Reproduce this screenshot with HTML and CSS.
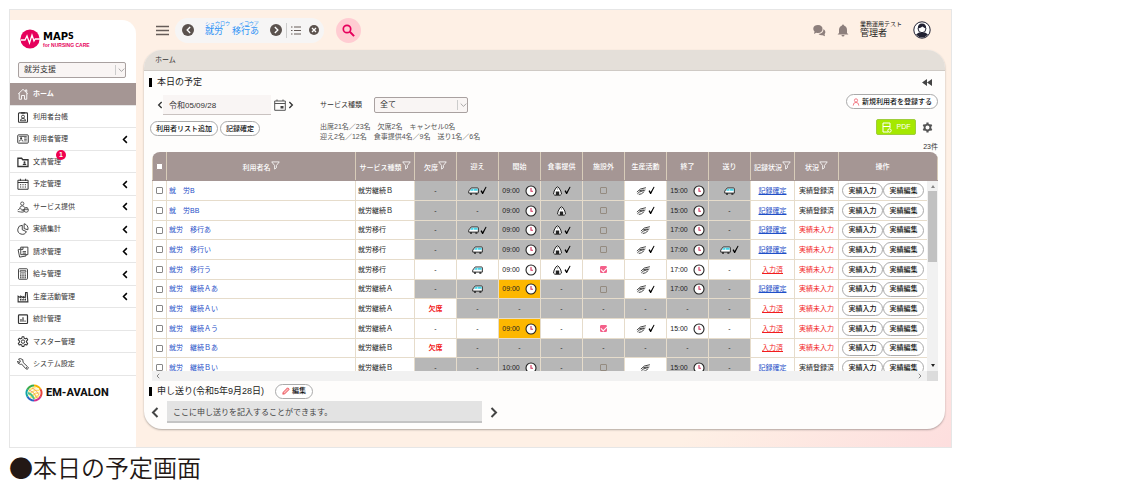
FILE: index.html
```
<!DOCTYPE html>
<html lang="ja">
<head>
    <meta charset="UTF-8">
    <title>本日の予定</title>
    <link rel="stylesheet" href="styles.css">
</head>
<body>

    <!-- icon set -->
    <svg class="icon-set" width="0" height="0" aria-hidden="true">
        <symbol id="left" viewBox="0 0 8 12"><path d="M6.500 1.500 2 6l4.500 4.500" fill="none" stroke="currentColor" stroke-width="2"/></symbol>
        <symbol id="right" viewBox="0 0 8 12"><path d="M1.500 1.500 6 6l-4.500 4.500" fill="none" stroke="currentColor" stroke-width="2"/></symbol>
        <symbol id="down" viewBox="0 0 10 10"><path d="m1 3 4 4 4-4" fill="none" stroke="currentColor"/></symbol>
        <symbol id="funnel" viewBox="0 0 10 10"><path d="M.8 1h8.400L6 5v2.500L4 9V5z" fill="none" stroke="currentColor" stroke-width=".9"/></symbol>
        <symbol id="check" viewBox="0 0 8 10"><path d="M.6 5.500 2 4.800l1 1.900L6.500.800l1 .3L3.500 9h-1z" fill="#000"/></symbol>
        <symbol id="clock" viewBox="0 0 12 12"><circle cx="6" cy="6" r="5" fill="#fff" stroke="#222" stroke-width="1.100"/><path d="M6 3v3.300h2" fill="none" stroke="#d2335c" stroke-width="1.100"/></symbol>
        <symbol id="van" viewBox="0 0 12 9"><path d="M3.500 1.200h6.800q1 0 1 1v4.600H.8V4.600z" fill="#fff" stroke="#222"/><path d="m2.200 4.200 1.900-2.200h1.900v2.200zM6.600 2h3.900v2.200H6.600z" fill="#43d3e8"/><path d="M2.200 7h2.200v1.500H2.200zM8 7h2.200v1.500H8z" fill="#222"/></symbol>
        <symbol id="rice" viewBox="0 0 10 10"><path d="M5 .8Q6.300.8 8.300 5q1.700 4-.6 4.200H2.300Q0 9 1.700 5 3.700.8 5 .8z" fill="#fff" stroke="#222"/><path d="M3.300 5.500h3.400v3.600H3.300z" fill="#222"/><path d="M5 2v2" stroke="#bbb"/></symbol>
        <symbol id="hand" viewBox="0 0 10 8"><path d="M.8 5 4 2.200 9 1M1.200 6.600 3 5l5.500-2M2.500 7.200 5 6.500l2.500-2M3 3.800l4-.8" fill="none" stroke="#444" stroke-width=".9"/></symbol>
        <symbol id="gear" viewBox="0 0 16 16"><path d="M6.800 1h2.400l.4 2 1.500.8 2-.8 1.200 2.100-1.500 1.400v1.900l1.500 1.400-1.200 2.100-2-.7-1.500.8-.4 2H6.800l-.4-2-1.500-.8-2 .7-1.200-2.100 1.500-1.400V6.500L1.700 5.100 2.900 3l2 .8L6.400 3z" fill="none" stroke="currentColor" stroke-width="1.400" stroke-linejoin="round"/><circle cx="8" cy="7.500" r="2.300" fill="none" stroke="currentColor" stroke-width="1.300"/></symbol>
        <symbol id="cog" viewBox="0 0 16 16"><circle cx="8" cy="8" r="4.200" fill="none" stroke="currentColor" stroke-width="2.600"/><path d="M8 .8v3M8 12.200v3M1.800 4.400l2.600 1.500M11.600 10.100l2.600 1.500M1.800 11.600l2.600-1.500M11.600 5.900l2.600-1.500" stroke="currentColor" stroke-width="3.200"/></symbol>
        <symbol id="home" viewBox="0 0 16 16"><path d="M1.500 8 8 1.800 14.500 8M3 7v8h3v-5h4v5h3V7M11.500 4.800V2.500h1.500v3.700" fill="none" stroke="currentColor" stroke-width="1.200"/></symbol>
        <symbol id="ledger" viewBox="0 0 16 16"><rect x="2" y="2.500" width="12" height="12.500" rx="1" fill="none" stroke="currentColor" stroke-width="1.400"/><path d="M5.500 1.500h5v2h-5z" fill="currentColor"/><circle cx="8" cy="7.500" r="2" fill="none" stroke="currentColor" stroke-width="1.200"/><path d="M4.500 13q0-3 3.500-3t3.500 3z" fill="none" stroke="currentColor" stroke-width="1.200"/></symbol>
        <symbol id="card" viewBox="0 0 16 16"><rect x="1" y="2.500" width="14" height="11" rx="1" fill="none" stroke="currentColor" stroke-width="1.300"/><circle cx="5.500" cy="7" r="1.400" fill="currentColor"/><path d="M3 11.500q0-2.500 2.500-2.500T8 11.500M9.500 6.500H13M9.500 8.500H13M9.500 10.500H13M3 4.700h10" fill="none" stroke="currentColor"/></symbol>
        <symbol id="folder" viewBox="0 0 16 16"><path d="M1.200 3h5l1.500 2h7v9H1.200z" fill="none" stroke="currentColor" stroke-width="1.700"/><circle cx="10" cy="8.300" r="1.300" fill="currentColor"/><path d="M7.500 12q0-2.300 2.500-2.300t2.500 2.300z" fill="currentColor"/></symbol>
        <symbol id="calendar" viewBox="0 0 16 16"><path d="M1.200 3h13.600v12H1.200zM1.200 6h13.600M4.500 1v3M11.500 1v3" fill="none" stroke="currentColor" stroke-width="1.300"/><path d="M4 9h8M4 12h8" stroke="currentColor" stroke-width="1.600" stroke-dasharray="1.600 1.600"/></symbol>
        <symbol id="service" viewBox="0 0 16 16"><circle cx="7" cy="3.500" r="2.200" fill="none" stroke="currentColor"/><path d="M3.500 10Q4 6.500 7 6.500t3 2.500M1 12l3-2 3 1.500h3l-1 1.500H6M1 14l6 1 3-1" fill="none" stroke="currentColor"/><circle cx="12.200" cy="12" r="3" fill="none" stroke="currentColor"/><path d="M9.500 11.500h5.400M11 9h3" stroke="currentColor"/></symbol>
        <symbol id="pie" viewBox="0 0 16 16"><path d="M7 3a6 6 0 1 0 5.500 8.500L7 9zM9.500 1v6.500l5 1.500A6.500 6.500 0 0 0 9.500 1z" fill="none" stroke="currentColor" stroke-width="1.200"/></symbol>
        <symbol id="bill" viewBox="0 0 16 16"><path d="M5 1.500h9.500v10H5zM5 4 1.500 5l2 9.800 8.500-1.500v-1.500M8 1.500v3H5M7.500 7.500H12M7.500 9.500H12" fill="none" stroke="currentColor" stroke-width="1.200"/></symbol>
        <symbol id="calc" viewBox="0 0 16 16"><rect x="2" y="1" width="12" height="14" rx="1" fill="none" stroke="currentColor" stroke-width="1.200"/><path d="M4.200 3.500h7.600v2H4.200z" fill="none" stroke="currentColor"/><path d="M4 8h8M4 10.500h8M4 13h8" stroke="currentColor" stroke-width="1.400" stroke-dasharray="2 1"/></symbol>
        <symbol id="factory" viewBox="0 0 16 16"><path d="M1.500 14.500V7L5 9V7l3.500 2V7.500L11 9l.5-7h2l1 12.500z" fill="none" stroke="currentColor" stroke-width="1.500"/><path d="M4 11.500h8" stroke="currentColor" stroke-width="2" stroke-dasharray="2 1"/></symbol>
        <symbol id="stats" viewBox="0 0 16 16"><rect x="2" y="2.500" width="12" height="11.500" rx="1" fill="none" stroke="currentColor" stroke-width="1.600"/><path d="M5.300 11.500V8M8 11.500v-6M10.700 11.500V10" stroke="currentColor" stroke-width="1.500"/></symbol>
        <symbol id="wrench" viewBox="0 0 16 16"><path d="M2 1.500 4.500 4 4 5.500 2.500 6 .8 4Q.5 8 4.500 8.500L6 8l6 6.500q2 1 2.800-.5T14 11.500L8.200 6Q9 1 4.500.8z" fill="none" stroke="currentColor" stroke-width="1.200"/><circle cx="12.800" cy="12.800" r=".7" fill="currentColor"/></symbol>
        <symbol id="user" viewBox="0 0 10 10"><circle cx="5" cy="3" r="2" fill="none" stroke="#f0626e"/><path d="M1.500 9.500Q1.500 5.500 5 5.500t3.500 4" fill="none" stroke="#f0626e"/></symbol>
        <symbol id="pencil" viewBox="0 0 10 10"><path d="m1 9 .6-2.500L7 1l2 2-5.500 5.400z" fill="#fbb" stroke="#e2333f"/></symbol>
    </svg>

    <figure class="shot">
        <div class="app">
            <aside class="sidebar">
                <div class="logo">
                    <svg width="20" height="20" viewBox="0 0 20 20"><circle cx="10" cy="10" r="9.600" fill="#e6005c"/><path d="M1 11h4l2-4 2.500 7 2.500-8 2 6 1.200-2H20" fill="none" stroke="#fff" stroke-width="1.300"/></svg>
                    <div>
                        <div class="logo-name">MAP<small>S</small></div>
                        <div class="logo-sub">for NURSING CARE</div>
                    </div>
                </div>
                <div class="select-box side-select">
                    <select aria-label="事業"><option>就労支援</option></select>
                    <svg><use href="#down"/></svg>
                </div>
                <ul class="menu" id="menu"></ul>
                <div class="vendor">
                    <svg width="18" height="18" viewBox="0 0 18 18" fill="none" stroke-width="2">
                        <path d="M9 1.500A7.500 7.500 0 0 1 15.500 5.500" stroke="#f4b400"/>
                        <path d="M15.500 5.300a7.500 7.500 0 0 1 0 7.400" stroke="#e8453c"/>
                        <path d="M15.500 12.500A7.500 7.500 0 0 1 9 16.500" stroke="#d5318c"/>
                        <path d="M9 16.500a7.500 7.500 0 0 1-6.500-4" stroke="#2a64c8"/>
                        <path d="M2.500 12.700a7.500 7.500 0 0 1 0-7.400" stroke="#12a5a5"/>
                        <path d="M2.500 5.500A7.500 7.500 0 0 1 9 1.500" stroke="#3bab4a"/>
                        <circle cx="9" cy="9" r="6" fill="#ffe66b" stroke="none"/>
                        <path d="M3 10q5-6 11-5M4 13q5-7 11-5M7 15q3-5 8-5" stroke="#fff" stroke-width="1.200"/>
                        <path d="M4 6q5 1 8 8M7 4q5 2 7 7" stroke="#ef8a5b" stroke-width=".8"/>
                        <path d="M3 9q4 1 6 6" stroke="#4bbf8b"/>
                    </svg>
                    <span>EM-AVALON</span>
                </div>
            </aside>

            <div class="main">
                <header class="topbar">
                    <button class="plain" aria-label="メニュー"><svg width="13" height="11"><path d="M0 1.500h13M0 5.500h13M0 9.500h13" stroke="#665c58" stroke-width="1.500"/></svg></button>
                    <div class="pill">
                        <button class="round" aria-label="前の利用者"><svg width="7" height="8"><use href="#left"/></svg></button>
                        <div class="current-user">
                            <div class="kana"><span>シュウロウ</span><span>イコウア</span></div>
                            <a href="#">就労　移行あ</a>
                        </div>
                        <button class="round" aria-label="次の利用者"><svg width="7" height="8"><use href="#right"/></svg></button>
                        <span class="split"></span>
                        <button class="plain" aria-label="一覧"><svg width="10" height="9"><path d="M3 1h7M3 4.500h7M3 8h7M0 1h1.500M0 4.500h1.500M0 8h1.500" stroke="#665c58"/></svg></button>
                        <button class="round small" aria-label="解除"><svg width="6" height="6" viewBox="0 0 6 6"><path d="m1 1 4 4M5 1 1 5" stroke="#fff" stroke-width="1.300"/></svg></button>
                    </div>
                    <button class="search" aria-label="検索"><svg width="13" height="13" viewBox="0 0 13 13"><circle cx="5" cy="5" r="3.700" fill="none" stroke="#e6005c" stroke-width="1.700"/><path d="m7.800 7.800 4.300 4.300" stroke="#e6005c" stroke-width="2"/></svg></button>
                    <div class="account">
                        <svg width="13" height="13" viewBox="0 0 13 13" fill="#8d7f7c"><path d="M5 1q4.500.3 4.500 4T5 9q-1 0-1.800-.3L1 10l.5-2.500Q0 6 .3 4 1 1.200 5 1z"/><path d="M10.500 5q0 4.500-5 5 1.500 1.500 4 1.200l2.500 1-.4-2q2-2.700-1.100-5.200z"/></svg>
                        <svg width="12" height="13" viewBox="0 0 12 13" fill="#8d7f7c"><path d="M6 .5q1 0 1 1 3 1 3 4.500v3l1.500 1.500H.5L2 9V6q0-3.500 3-4.500 0-1 1-1zM4.500 11h3q0 1.500-1.500 1.500T4.500 11z"/></svg>
                        <div class="who">
                            <div class="office">業務運用テスト</div>
                            <div>管理者</div>
                        </div>
                        <svg width="18" height="18" viewBox="0 0 18 18"><circle cx="9" cy="9" r="8.200" fill="#fff" stroke="#223" stroke-width="1"/><path d="M3 13.500Q5 11 9 11t6 2.500Q12.500 16.500 9 16.500T3 13.500z" fill="#223"/><circle cx="9" cy="7.800" r="3.900" fill="#fff" stroke="#223"/><path d="M4.800 7.500Q4.800 2.500 9 2.500t4.200 5Q11 7 9.500 5.500 8 7 4.800 7.500z" fill="#223"/></svg>
                    </div>
                </header>

                <section class="panel">
                    <div class="crumb">ホーム</div>
                    <div class="content">
                        <div class="title-row">
                            <h1>本日の予定</h1>
                            <button class="plain fold" aria-label="閉じる"><svg width="10" height="7"><path d="M5 0v7L0 3.500zM10 0v7L5 3.500z" fill="#444"/></svg></button>
                        </div>

                        <div class="tools">
                            <div class="tools-left">
                                <div class="date-row">
                                    <button class="plain" aria-label="前日"><svg width="6" height="8"><use href="#left"/></svg></button>
                                    <input type="text" value="令和05/09/28" aria-label="日付">
                                    <button class="plain" aria-label="カレンダー"><svg width="12" height="12" viewBox="0 0 12 12"><path d="M.7 2h10.600v9.300H.7zM.7 4.500h10.600M3 .5V2M9 .5V2" fill="none" stroke="#555"/><path d="M6.500 7h3v2.500h-3z" fill="#444"/></svg></button>
                                    <button class="plain" aria-label="翌日"><svg width="6" height="8"><use href="#right"/></svg></button>
                                </div>
                                <div class="button-row">
                                    <button class="oval">利用者リスト追加</button>
                                    <button class="oval">記録確定</button>
                                </div>
                            </div>
                            <div class="tools-mid">
                                <div class="filter-row">
                                    <label for="service-type">サービス種類</label>
                                    <div class="select-box">
                                        <select id="service-type"><option>全て</option></select>
                                        <svg><use href="#down"/></svg>
                                    </div>
                                </div>
                                <p class="summary">出席21名／23名　欠席2名　キャンセル0名<br>迎え2名／12名　食事提供4名／9名　送り1名／6名</p>
                            </div>
                            <div class="tools-right">
                                <button class="oval"><svg width="8" height="8"><use href="#user"/></svg>新規利用者を登録する</button>
                                <div class="pdf-row">
                                    <button class="pdf"><svg width="10" height="11" viewBox="0 0 10 11" fill="none" stroke="#fff"><path d="M6 10H1V1h7v5M1 4.500h7"/><circle cx="7.500" cy="8.500" r="1.700"/></svg>PDF</button>
                                    <button class="plain" aria-label="設定"><svg class="cog" width="11" height="11"><use href="#cog"/></svg></button>
                                </div>
                                <div class="total">23件</div>
                            </div>
                        </div>

                        <div class="table-box">
                            <table>
                                <colgroup>
                                    <col class="c-check"><col class="c-name"><col class="c-service">
                                    <col class="c-cell" span="8">
                                    <col class="c-state" span="2"><col class="c-ops">
                                </colgroup>
                                <thead>
                                    <tr>
                                        <th><input type="checkbox" aria-label="すべて選択"></th>
                                        <th>利用者名<svg class="funnel"><use href="#funnel"/></svg></th>
                                        <th>サービス種類<svg class="funnel"><use href="#funnel"/></svg></th>
                                        <th>欠席<svg class="funnel"><use href="#funnel"/></svg></th>
                                        <th>迎え</th>
                                        <th>開始</th>
                                        <th>食事提供</th>
                                        <th>施設外</th>
                                        <th>生産活動</th>
                                        <th>終了</th>
                                        <th>送り</th>
                                        <th>記録状況<svg class="funnel"><use href="#funnel"/></svg></th>
                                        <th>状況<svg class="funnel"><use href="#funnel"/></svg></th>
                                        <th class="ops">操作</th>
                                    </tr>
                                </thead>
                                <tbody id="rows"></tbody>
                            </table>
                            <div class="scroll-y"><span class="tri up"></span><span class="thumb"></span><span class="tri down"></span></div>
                        </div>
                        <div class="scroll-x">
                            <svg width="4" height="6"><use href="#left"/></svg>
                            <svg width="4" height="6"><use href="#right"/></svg>
                            <span class="corner"></span>
                        </div>

                        <div class="title-row memo-title">
                            <h2>申し送り(令和5年9月28日)</h2>
                            <button class="oval"><svg width="8" height="8"><use href="#pencil"/></svg>編集</button>
                        </div>
                        <div class="memo">
                            <button class="plain" aria-label="前へ"><svg width="8" height="13"><use href="#left"/></svg></button>
                            <input type="text" value="ここに申し送りを記入することができます。" aria-label="申し送り" readonly>
                            <button class="plain" aria-label="次へ"><svg width="8" height="13"><use href="#right"/></svg></button>
                        </div>
                    </div>
                </section>
            </div>
        </div>
        <figcaption>●本日の予定画面</figcaption>
    </figure>

    <script>
        // [icon, label, has submenu, badge]
        const menu = [
            ['home', 'ホーム', false],
            ['ledger', '利用者台帳', false],
            ['card', '利用者管理', true],
            ['folder', '文書管理', false, 1],
            ['calendar', '予定管理', true],
            ['service', 'サービス提供', true],
            ['pie', '実績集計', true],
            ['bill', '請求管理', true],
            ['calc', '給与管理', true],
            ['factory', '生産活動管理', true],
            ['stats', '統計管理', false],
            ['gear', 'マスター管理', false],
            ['wrench', 'システム設定', false]
        ];

        document.getElementById('menu').innerHTML = menu.map(([icon, label, sub, badge], i) => `
            <li class="${i === 0 ? 'active' : ''}"><a href="#">
                <svg width="12" height="12"><use href="#${icon}"/></svg>
                <span class="label">${label}${badge ? `<b class="badge">${badge}</b>` : ''}</span>
                ${sub ? '<svg class="arrow" width="6" height="9"><use href="#left"/></svg>' : ''}
            </a></li>`).join('');

        // a leading "g" is a locked (gray) cell, "o" is a late (orange) cell, "+" is done
        const rows = [
            ['就　労B', '就労継続Ｂ', 'g- gvan+ g09:00 grice+ gbox hand+ g15:00 gvan', '記録確定', '実績登録済'],
            ['就　労BB', '就労継続Ｂ', 'g- g- g09:00 grice gbox hand+ g15:00 g-', '記録確定', '実績登録済'],
            ['就労　移行あ', '就労移行', 'g- gvan+ g09:00 grice+ gbox hand g17:00 g-', '記録確定', '実績未入力'],
            ['就労　移行い', '就労移行', 'g- gvan g09:00 grice+ gbox hand+ g17:00 gvan+', '記録確定', '実績未入力'],
            ['就労　移行う', '就労移行', '- van 09:00 rice+ box+ hand 17:00 -', '入力済', '実績未入力'],
            ['就労　継続Ａあ', '就労継続Ａ', 'g- gvan o09:00 g- gbox hand+ g17:00 g-', '記録確定', '実績未入力'],
            ['就労　継続Ａい', '就労継続Ａ', '欠席 g- g- g- g- g- g- g-', '入力済', '実績未入力'],
            ['就労　継続Ａう', '就労継続Ａ', '- - o09:00 - box+ hand+ 15:00 -', '入力済', '実績未入力'],
            ['就労　継続Ｂあ', '就労継続Ｂ', '欠席 g- g- g- g- g- g- g-', '入力済', '実績未入力'],
            ['就労　継続Ｂい', '就労継続Ｂ', 'g- g- g10:00 g- gbox hand g15:00 g-', '記録確定', '実績登録済']
        ];

        function cell(code) {
            let cls = '';
            if (code[0] === 'g') cls = 'locked';
            if (code[0] === 'o') cls = 'late';
            if (cls) code = code.slice(1);
            const done = code.endsWith('+');
            const kind = code.replace('+', '');
            let body = kind;
            if (kind === '欠席') {
                cls = 'absent';
            } else if (kind === 'box') {
                body = `<input type="checkbox" aria-label="施設外"${done ? ' checked' : ''}>`;
            } else if (kind.includes(':')) {
                body = `<span class="time">${kind}<svg width="12" height="12"><use href="#clock"/></svg></span>`;
            } else if (kind !== '-') {
                body = `<span class="mark"><svg width="11" height="10"><use href="#${kind}"/></svg>` +
                    (done ? '<svg width="7" height="9"><use href="#check"/></svg>' : '') + '</span>';
            }
            return `<td class="${cls}">${body}</td>`;
        }

        document.getElementById('rows').innerHTML = rows.map(([name, service, cells, record, state]) => `
            <tr>
                <td><input type="checkbox" aria-label="${name}"></td>
                <td class="text"><a href="#">${name}</a></td>
                <td class="text">${service}</td>
                ${cells.split(' ').map(cell).join('')}
                <td><a href="#" class="record ${record === '入力済' ? 'red' : ''}">${record}</a></td>
                <td class="${state === '実績未入力' ? 'red' : ''}">${state}</td>
                <td class="ops"><div><button class="oval">実績入力</button><button class="oval">実績編集</button></div></td>
            </tr>`).join('');
    </script>
</body>
</html>
```
FILE: styles.css
```
* {
    box-sizing: border-box;
}
body {
    margin: 0;
    background-color: #fff;
    font-family: "Liberation Sans", "Noto Sans CJK JP", sans-serif;
    font-size: 7px;
    line-height: 10px;
    color: #333;
}
button, input, select {
    margin: 0;
    padding: 0;
    font: inherit;
    color: inherit;
}
a {
    text-decoration: none;
    color: inherit;
}
svg {
    display: block;
    flex: none;
}
.icon-set {
    position: absolute;
}
.shot {
    margin: 9px 169px 0 9px;
}
.app {
    display: flex;
    border: 1px solid #e6e6e6;
    background: linear-gradient(135deg, #fef0e5 80%, #fddede);
}
figcaption {
    margin-top: 5px;
    font-family: "Noto Sans CJK JP", sans-serif;
    font-size: 24px;
    font-weight: 350;
    line-height: 28px;
    color: #231815;
}

/* sidebar */
.sidebar {
    width: 126px;
    flex: none;
    margin-top: 10px;
    background-color: #fff;
    border-top-right-radius: 14px;
}
.logo {
    display: flex;
    align-items: center;
    gap: 3px;
    padding: 9px 0 13px 10px;
    color: #000;
}
.logo-name {
    font-family: "DejaVu Sans", sans-serif;
    font-size: 10px;
    font-weight: bold;
    line-height: 11px;
}
.logo-name small {
    font-size: 8px;
    vertical-align: top;
}
.logo-sub {
    font-size: 5px;
    font-weight: bold;
    line-height: 6px;
    color: #e6005c;
}
.select-box {
    position: relative;
    width: 94px;
}
.select-box select {
    display: block;
    width: 100%;
    height: 16px;
    padding: 0 5px;
    border: 1px solid #a9a1a0;
    border-radius: 2px;
    background-color: #f9f5f4;
    font-size: 8px;
    appearance: none;
}
.select-box svg {
    position: absolute;
    top: 3px;
    right: 1px;
    width: 10px;
    height: 10px;
    padding-left: 2px;
    border-left: 1px solid #ccc;
    color: #888;
}
.side-select {
    width: auto;
    margin: 0 10px 5px 8px;
}
.menu {
    margin: 0;
    padding: 0;
    list-style: none;
}
.menu li {
    height: 23px;
    border-bottom: 1px solid #e6e6e6;
}
.menu li:nth-child(2n) {
    height: 22px;
}
.menu a {
    display: flex;
    align-items: center;
    height: 100%;
    gap: 4px;
    padding: 0 8px 0 7px;
}
.menu .active {
    background-color: #a59694;
    color: #fff;
    font-weight: bold;
}
.label {
    position: relative;
}
.badge {
    position: absolute;
    top: -7px;
    right: -5px;
    width: 10px;
    border-radius: 5px;
    background-color: #f0004f;
    color: #fff;
    text-align: center;
}
.arrow {
    margin-left: auto;
    color: #000;
}
.vendor {
    display: flex;
    align-items: center;
    gap: 3px;
    padding: 8px 0 7px 15px;
    font-family: Roboto, sans-serif;
    font-size: 11px;
    font-weight: 800;
    color: #111;
}

/* top bar */
.main {
    flex: 1;
    min-width: 0;
    padding: 0 6px 18px 8px;
}
.topbar {
    display: flex;
    align-items: center;
    height: 40px;
    padding: 0 14px 0 12px;
}
.plain {
    border: none;
    background: none;
    cursor: pointer;
}
.pill {
    display: flex;
    align-items: center;
    height: 25px;
    margin: 0 12px 0 6px;
    padding: 0 5px 0 7px;
    border-radius: 13px;
    background-color: #f6f5f5;
}
.round {
    display: flex;
    align-items: center;
    justify-content: center;
    width: 12px;
    height: 12px;
    border: none;
    border-radius: 50%;
    background-color: #5b524e;
    color: #fff;
}
.round.small {
    width: 10px;
    height: 10px;
    margin-left: 8px;
}
.current-user {
    padding: 0 11px 4px;
    font-size: 9px;
    color: #2c92f5;
}
.kana {
    display: flex;
    gap: 9px;
    font-size: 5px;
    line-height: 6px;
}
.split {
    height: 15px;
    margin: 0 4px;
    border-left: 1px solid #ccc;
}
.search {
    display: flex;
    align-items: center;
    justify-content: center;
    width: 25px;
    height: 25px;
    border: none;
    border-radius: 50%;
    background-color: #ffccd2;
}
.account {
    display: flex;
    align-items: center;
    gap: 11px;
    margin-left: auto;
}
.who {
    padding-bottom: 2px;
    font-size: 9px;
    color: #222;
}
.office {
    font-size: 6px;
    line-height: 8px;
}

/* panel */
.panel {
    overflow: hidden;
    border-radius: 18px;
    background-color: #fefdfc;
    box-shadow: 0 1px 2px rgba(0, 0, 0, 0.3);
}
.crumb {
    height: 21px;
    padding: 5px 11px;
    border-bottom: 1px solid #cfcac5;
    background-color: #e4dfd9;
}
.content {
    padding: 0 7px 6px 8px;
}
.title-row {
    display: flex;
    align-items: center;
    height: 22px;
    margin-left: -3px;
}
h1, h2 {
    margin: 0;
    padding-left: 5px;
    border-left: 3px solid #000;
    font-size: 9px;
    font-weight: normal;
    line-height: 9px;
    color: #222;
}
.fold {
    margin-left: auto;
    padding-right: 6px;
}
.tools {
    display: flex;
    height: 59px;
}
.tools-left {
    width: 168px;
}
.date-row, .filter-row {
    display: flex;
    align-items: center;
    height: 24px;
}
.date-row {
    padding-left: 5px;
}
.date-row input {
    width: 108px;
    height: 20px;
    margin-right: 3px;
    padding: 0 6px;
    border: none;
    border-bottom: 1px solid #c9c2c0;
    background-color: #f9f5f4;
    font-size: 8px;
}
.date-row button:last-child {
    margin-left: 2px;
}
.button-row {
    display: flex;
    gap: 2px;
    margin: 4px 0 0 -2px;
}
.oval {
    display: flex;
    align-items: center;
    justify-content: center;
    gap: 2px;
    height: 15px;
    padding: 0 5px;
    border: 1px solid #aaa;
    border-radius: 8px;
    background-color: #fff;
    color: #111;
    font-weight: 500;
    white-space: nowrap;
}
.filter-row {
    gap: 12px;
}
.summary {
    margin: 5px 0 0;
    color: #555;
}
.tools-right {
    display: flex;
    flex-direction: column;
    align-items: flex-end;
    margin-left: auto;
}
.tools-right > .oval {
    margin-top: 1px;
}
.pdf-row {
    display: flex;
    align-items: center;
    gap: 6px;
    margin: 10px 5px 7px 0;
}
.pdf {
    display: flex;
    align-items: center;
    justify-content: center;
    gap: 5px;
    width: 40px;
    height: 16px;
    border: 1px solid #9fce3c;
    border-radius: 2px;
    background-color: #a5e800;
    color: #fff;
}
.cog {
    color: #555;
}

/* schedule table */
.table-box {
    position: relative;
    height: 219px;
    overflow: hidden;
    border-radius: 8px 8px 0 0;
}
table {
    width: 100%;
    border-collapse: collapse;
    table-layout: fixed;
    color: #222;
}
.c-check { width: 14px; }
.c-service { width: 59px; }
.c-cell { width: 42px; }
.c-state { width: 44px; }
.c-ops { width: 99px; }
th, td {
    height: inherit;
    padding: 0;
    border: 1px solid #e6dccb;
    text-align: center;
    white-space: nowrap;
}
th {
    border-color: #a59694 #d8ccb9;
    background-color: #a59694;
    color: #fff;
    font-weight: 500;
}
thead tr {
    height: 28px;
}
tbody tr {
    height: 20px;
    background-color: #fff;
}
tbody tr:nth-child(3n) {
    height: 19px;
}
.funnel {
    display: inline-block;
    width: 9px;
    height: 9px;
}
.text {
    padding-left: 2px;
    text-align: left;
}
.text a, .record {
    color: #1f50c8;
}
.record {
    text-decoration: underline;
}
.red, .record.red {
    color: #f21d1d;
}
.locked {
    background-color: #b7b7b7;
}
.late {
    background-color: #fdb700;
}
.absent {
    color: #f21d1d;
    font-weight: bold;
}
.time, .mark {
    display: flex;
    align-items: center;
    justify-content: center;
    gap: 5px;
}
.mark {
    gap: 1px;
}
td input, th input {
    display: block;
    width: 7px;
    height: 7px;
    margin: 0 auto;
    border: 1px solid #888;
    border-radius: 1px;
    background-color: #fff;
    appearance: none;
}
th input {
    border-color: #a59694;
}
.locked input {
    border-color: #948b80;
    background-color: transparent;
}
td input:checked {
    border-color: #f4608a;
    background-color: #f4608a;
}
td input:checked::after {
    content: "";
    display: block;
    width: 5px;
    height: 3px;
    border: solid #fff;
    border-width: 0 0 1px 1px;
    transform: rotate(-45deg);
}
.ops {
    padding-right: 11px;
}
.ops div {
    display: flex;
    padding-left: 3px;
}
.ops .oval {
    width: 41px;
}
.scroll-y {
    display: flex;
    flex-direction: column;
    align-items: center;
    position: absolute;
    top: 29px;
    right: 0;
    bottom: 0;
    width: 11px;
    padding: 4px 1px;
    background-color: #f1f1f1;
}
.thumb {
    width: 9px;
    height: 71px;
    margin: 3px 0 auto;
    background-color: #c1c1c1;
}
.tri {
    border: 2px solid transparent;
}
.up {
    border-top: none;
    border-bottom: 3px solid #888;
}
.down {
    border-bottom: none;
    border-top: 3px solid #222;
}
.scroll-x {
    display: flex;
    align-items: center;
    justify-content: space-between;
    height: 10px;
    padding-left: 4px;
    background-color: #f1f1f1;
    color: #888;
}
.scroll-x svg:nth-child(2) {
    margin-left: auto;
    margin-right: 5px;
}
.corner {
    width: 11px;
    height: 10px;
    background-color: #dcdcdc;
}

/* handover memo */
.memo-title {
    height: 20px;
    gap: 11px;
}
.memo-title .oval {
    padding: 0 6px;
}
.memo {
    display: flex;
    align-items: center;
    gap: 8px;
    height: 22px;
    margin-left: -1px;
    color: #444;
}
.memo input {
    width: 40%;
    height: 22px;
    padding: 0 6px;
    border: none;
    border-bottom: 2px solid #c4c4c4;
    background-color: #e3e3e3;
    font-size: 8px;
}
```
